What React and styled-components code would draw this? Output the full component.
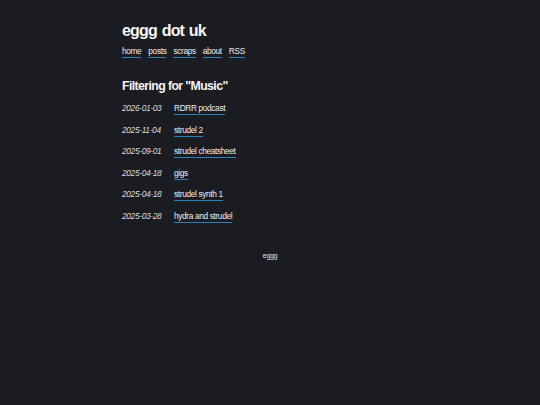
import React from "react";
import styled, { createGlobalStyle } from "styled-components";

const GlobalStyle = createGlobalStyle`
  html, body {
    margin: 0;
    padding: 0;
    background: #1b1b22;
    color: #f2f2f2;
    font-family: "Liberation Sans", Arial, sans-serif;
  }
`;

const posts = [
  { date: "2026-01-03", title: "RDRR podcast" },
  { date: "2025-11-04", title: "strudel 2" },
  { date: "2025-09-01", title: "strudel cheatsheet" },
  { date: "2025-04-18", title: "gigs" },
  { date: "2025-04-18", title: "strudel synth 1" },
  { date: "2025-03-28", title: "hydra and strudel" },
];

function App() {
  return (
    <Page>
      <GlobalStyle />
      <Main>
        <Header>
          <Title>eggg dot uk</Title>
          <Nav>
            <Link href="#">home</Link>
            <Link href="#">posts</Link>
            <Link href="#">scraps</Link>
            <Link href="#">about</Link>
            <Link href="#">RSS</Link>
          </Nav>
        </Header>

        <Heading>Filtering for "Music"</Heading>
        <List>
          {posts.map((post) => (
            <Row key={post.date + post.title}>
              <Date>{post.date}</Date>
              <Link href="#">{post.title}</Link>
            </Row>
          ))}
        </List>
      </Main>
      <Footer>eggg</Footer>
    </Page>
  );
}

const Page = styled.div`
  min-height: 405px;
  padding-top: 21px;
  box-sizing: border-box;
`;

const Main = styled.main`
  width: 296px;
  margin: 0 auto;
`;

const Header = styled.header`
  display: flex;
  flex-direction: column;
`;

const Title = styled.h1`
  margin: 0;
  font-size: 16px;
  letter-spacing: -0.8px;
  word-spacing: 1px;
  font-weight: bold;
  line-height: 20px;
  color: #f5f5f5;
`;

const Nav = styled.nav`
  display: flex;
  gap: 7px;
  margin-top: 5px;
`;

const Link = styled.a`
  font-size: 8.3px;
  letter-spacing: -0.35px;
  line-height: 11px;
  color: #ededed;
  text-decoration: none;
  border-bottom: 1.5px solid #2f7fb8;
`;

const Heading = styled.h2`
  margin: 20px 0 0;
  font-size: 12.3px;
  letter-spacing: -0.6px;
  line-height: 16px;
  font-weight: bold;
  color: #f5f5f5;
`;

const List = styled.ul`
  list-style: none;
  margin: 9px 0 0;
  padding: 0;
  display: flex;
  flex-direction: column;
  gap: 8.6px;
`;

const Row = styled.li`
  display: flex;
  align-items: baseline;
  height: 13px;
`;

const Date = styled.span`
  width: 52px;
  font-size: 8.4px;
  letter-spacing: -0.35px;
  font-style: italic;
  color: #dcdcdc;
`;

const Footer = styled.footer`
  margin-top: 28px;
  text-align: center;
  font-size: 7px;
  letter-spacing: -0.3px;
  color: #e0e0e0;
`;

export default App;
